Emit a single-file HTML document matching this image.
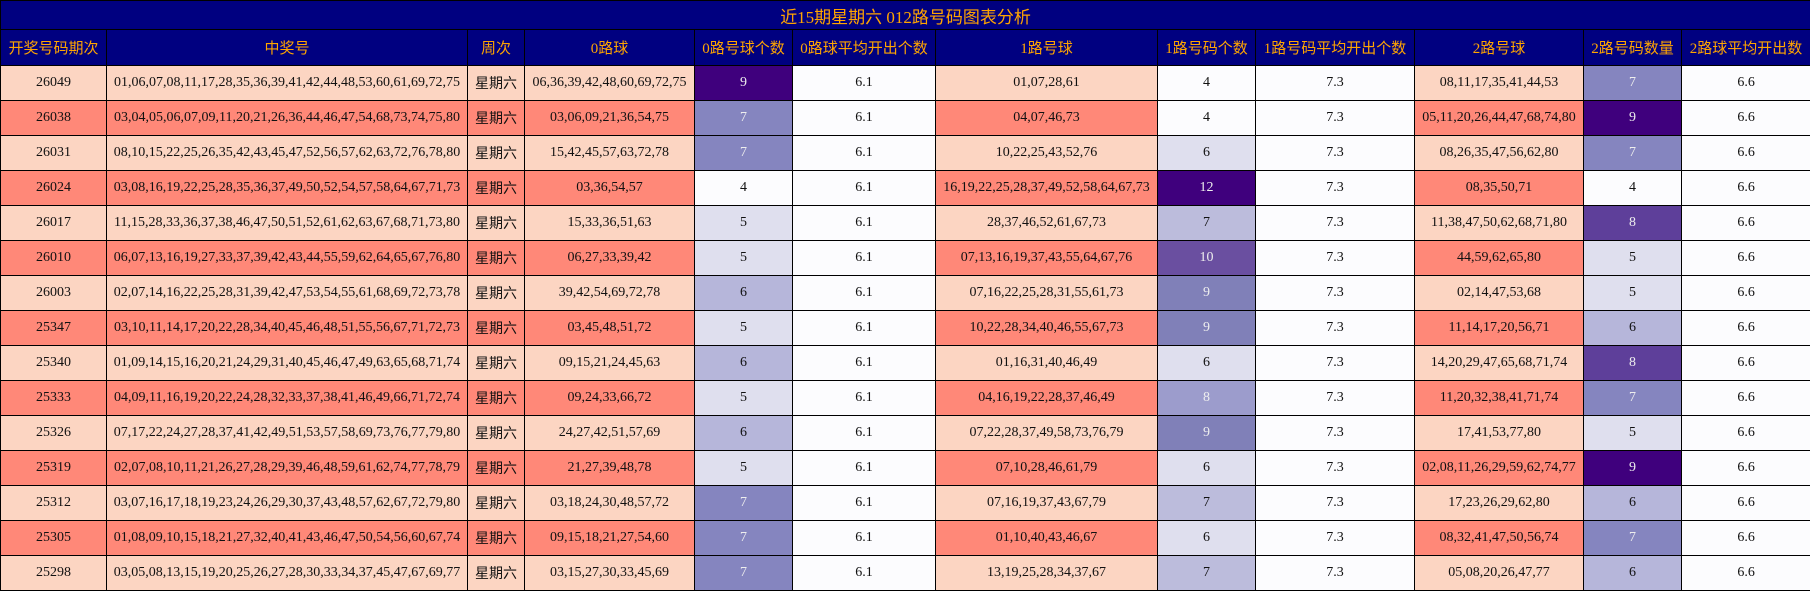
<!DOCTYPE html>
<html><head><meta charset="utf-8"><style>
html,body{margin:0;padding:0;background:#fff;}
table{border-collapse:collapse;table-layout:fixed;width:1810px;font-family:"Liberation Serif","Noto Serif CJK SC",serif;font-size:14px;color:#111;}
td{border:1px solid #000;text-align:center;padding:0;height:34px;white-space:nowrap;overflow:hidden;}
.t td{background:#000080;color:#FFA500;height:28px;font-size:17px;font-family:"Liberation Serif","Noto Sans CJK SC",serif;}
.h td{background:#000080;color:#FFA500;height:35px;font-size:15px;font-family:"Liberation Serif","Noto Sans CJK SC",serif;}
.a td{background:#FCD5C2;}
.b td{background:#FF8878;}
td.w{background:#FCFCFE!important;}
td.wk{font-family:"Liberation Sans","Noto Sans CJK SC",sans-serif;font-size:14px;}
td.c4{background:#FCFCFE!important;}
td.c5{background:#DFDFEE!important;}
td.c6{background:#B6B6DA!important;}
td.c7{background:#8585BF!important;color:#eee;}
td.c7d{background:#BCBCDC!important;}
td.c6l{background:#DFDFEE!important;}
td.c8a{background:#9C9CCC!important;color:#eee;}
td.c8{background:#5E3F9A!important;color:#eee;}
td.c9{background:#3F007D!important;color:#eee;}
td.c9m{background:#8080B8!important;color:#eee;}
td.c10{background:#6A4FA0!important;color:#eee;}
</style></head><body>
<table>
<colgroup><col style="width:106px"><col style="width:361px"><col style="width:57px"><col style="width:170px"><col style="width:98px"><col style="width:143px"><col style="width:222px"><col style="width:98px"><col style="width:159px"><col style="width:169px"><col style="width:98px"><col style="width:129px"></colgroup>
<tr class="t"><td colspan="12">近15期星期六 012路号码图表分析</td></tr>
<tr class="h"><td>开奖号码期次</td><td>中奖号</td><td>周次</td><td>0路球</td><td>0路号球个数</td><td>0路球平均开出个数</td><td>1路号球</td><td>1路号码个数</td><td>1路号码平均开出个数</td><td>2路号球</td><td>2路号码数量</td><td>2路球平均开出数</td></tr>
<tr class="a"><td>26049</td><td>01,06,07,08,11,17,28,35,36,39,41,42,44,48,53,60,61,69,72,75</td><td class="wk">星期六</td><td>06,36,39,42,48,60,69,72,75</td><td class="c9">9</td><td class="w">6.1</td><td>01,07,28,61</td><td class="c4">4</td><td class="w">7.3</td><td>08,11,17,35,41,44,53</td><td class="c7">7</td><td class="w">6.6</td></tr>
<tr class="b"><td>26038</td><td>03,04,05,06,07,09,11,20,21,26,36,44,46,47,54,68,73,74,75,80</td><td class="wk">星期六</td><td>03,06,09,21,36,54,75</td><td class="c7">7</td><td class="w">6.1</td><td>04,07,46,73</td><td class="c4">4</td><td class="w">7.3</td><td>05,11,20,26,44,47,68,74,80</td><td class="c9">9</td><td class="w">6.6</td></tr>
<tr class="a"><td>26031</td><td>08,10,15,22,25,26,35,42,43,45,47,52,56,57,62,63,72,76,78,80</td><td class="wk">星期六</td><td>15,42,45,57,63,72,78</td><td class="c7">7</td><td class="w">6.1</td><td>10,22,25,43,52,76</td><td class="c6l">6</td><td class="w">7.3</td><td>08,26,35,47,56,62,80</td><td class="c7">7</td><td class="w">6.6</td></tr>
<tr class="b"><td>26024</td><td>03,08,16,19,22,25,28,35,36,37,49,50,52,54,57,58,64,67,71,73</td><td class="wk">星期六</td><td>03,36,54,57</td><td class="c4">4</td><td class="w">6.1</td><td>16,19,22,25,28,37,49,52,58,64,67,73</td><td class="c9">12</td><td class="w">7.3</td><td>08,35,50,71</td><td class="c4">4</td><td class="w">6.6</td></tr>
<tr class="a"><td>26017</td><td>11,15,28,33,36,37,38,46,47,50,51,52,61,62,63,67,68,71,73,80</td><td class="wk">星期六</td><td>15,33,36,51,63</td><td class="c5">5</td><td class="w">6.1</td><td>28,37,46,52,61,67,73</td><td class="c7d">7</td><td class="w">7.3</td><td>11,38,47,50,62,68,71,80</td><td class="c8">8</td><td class="w">6.6</td></tr>
<tr class="b"><td>26010</td><td>06,07,13,16,19,27,33,37,39,42,43,44,55,59,62,64,65,67,76,80</td><td class="wk">星期六</td><td>06,27,33,39,42</td><td class="c5">5</td><td class="w">6.1</td><td>07,13,16,19,37,43,55,64,67,76</td><td class="c10">10</td><td class="w">7.3</td><td>44,59,62,65,80</td><td class="c5">5</td><td class="w">6.6</td></tr>
<tr class="a"><td>26003</td><td>02,07,14,16,22,25,28,31,39,42,47,53,54,55,61,68,69,72,73,78</td><td class="wk">星期六</td><td>39,42,54,69,72,78</td><td class="c6">6</td><td class="w">6.1</td><td>07,16,22,25,28,31,55,61,73</td><td class="c9m">9</td><td class="w">7.3</td><td>02,14,47,53,68</td><td class="c5">5</td><td class="w">6.6</td></tr>
<tr class="b"><td>25347</td><td>03,10,11,14,17,20,22,28,34,40,45,46,48,51,55,56,67,71,72,73</td><td class="wk">星期六</td><td>03,45,48,51,72</td><td class="c5">5</td><td class="w">6.1</td><td>10,22,28,34,40,46,55,67,73</td><td class="c9m">9</td><td class="w">7.3</td><td>11,14,17,20,56,71</td><td class="c6">6</td><td class="w">6.6</td></tr>
<tr class="a"><td>25340</td><td>01,09,14,15,16,20,21,24,29,31,40,45,46,47,49,63,65,68,71,74</td><td class="wk">星期六</td><td>09,15,21,24,45,63</td><td class="c6">6</td><td class="w">6.1</td><td>01,16,31,40,46,49</td><td class="c6l">6</td><td class="w">7.3</td><td>14,20,29,47,65,68,71,74</td><td class="c8">8</td><td class="w">6.6</td></tr>
<tr class="b"><td>25333</td><td>04,09,11,16,19,20,22,24,28,32,33,37,38,41,46,49,66,71,72,74</td><td class="wk">星期六</td><td>09,24,33,66,72</td><td class="c5">5</td><td class="w">6.1</td><td>04,16,19,22,28,37,46,49</td><td class="c8a">8</td><td class="w">7.3</td><td>11,20,32,38,41,71,74</td><td class="c7">7</td><td class="w">6.6</td></tr>
<tr class="a"><td>25326</td><td>07,17,22,24,27,28,37,41,42,49,51,53,57,58,69,73,76,77,79,80</td><td class="wk">星期六</td><td>24,27,42,51,57,69</td><td class="c6">6</td><td class="w">6.1</td><td>07,22,28,37,49,58,73,76,79</td><td class="c9m">9</td><td class="w">7.3</td><td>17,41,53,77,80</td><td class="c5">5</td><td class="w">6.6</td></tr>
<tr class="b"><td>25319</td><td>02,07,08,10,11,21,26,27,28,29,39,46,48,59,61,62,74,77,78,79</td><td class="wk">星期六</td><td>21,27,39,48,78</td><td class="c5">5</td><td class="w">6.1</td><td>07,10,28,46,61,79</td><td class="c6l">6</td><td class="w">7.3</td><td>02,08,11,26,29,59,62,74,77</td><td class="c9">9</td><td class="w">6.6</td></tr>
<tr class="a"><td>25312</td><td>03,07,16,17,18,19,23,24,26,29,30,37,43,48,57,62,67,72,79,80</td><td class="wk">星期六</td><td>03,18,24,30,48,57,72</td><td class="c7">7</td><td class="w">6.1</td><td>07,16,19,37,43,67,79</td><td class="c7d">7</td><td class="w">7.3</td><td>17,23,26,29,62,80</td><td class="c6">6</td><td class="w">6.6</td></tr>
<tr class="b"><td>25305</td><td>01,08,09,10,15,18,21,27,32,40,41,43,46,47,50,54,56,60,67,74</td><td class="wk">星期六</td><td>09,15,18,21,27,54,60</td><td class="c7">7</td><td class="w">6.1</td><td>01,10,40,43,46,67</td><td class="c6l">6</td><td class="w">7.3</td><td>08,32,41,47,50,56,74</td><td class="c7">7</td><td class="w">6.6</td></tr>
<tr class="a"><td>25298</td><td>03,05,08,13,15,19,20,25,26,27,28,30,33,34,37,45,47,67,69,77</td><td class="wk">星期六</td><td>03,15,27,30,33,45,69</td><td class="c7">7</td><td class="w">6.1</td><td>13,19,25,28,34,37,67</td><td class="c7d">7</td><td class="w">7.3</td><td>05,08,20,26,47,77</td><td class="c6">6</td><td class="w">6.6</td></tr>
</table>
</body></html>
